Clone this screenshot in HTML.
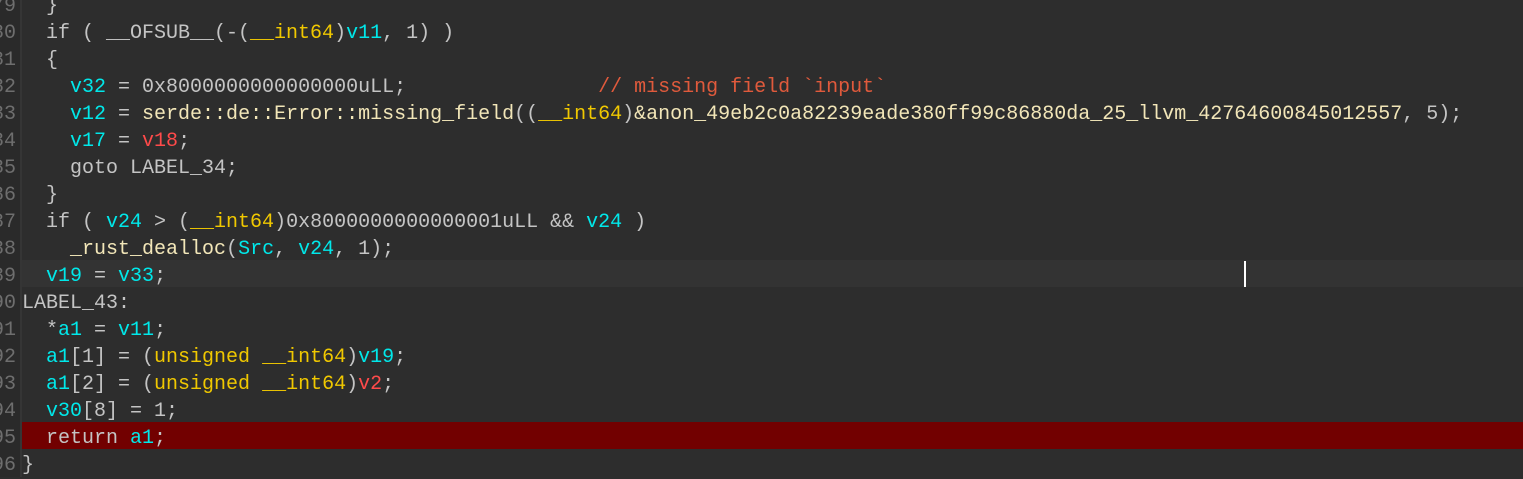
<!DOCTYPE html>
<html><head><style>
html,body{margin:0;padding:0;width:1523px;height:477px;overflow:hidden;background:#2d2d2d;}
body{font-family:"Liberation Mono",monospace;font-size:20px;}
.g{position:absolute;left:0;top:0;width:20px;height:477px;background:#2a2a2a;border-right:2px solid #353535;}
.l{position:absolute;left:0;height:27px;width:1523px;line-height:27px;white-space:pre;color:#c4c4c4;}
.n{position:absolute;right:1507px;top:3px;color:#6e6e6e;}
.c{position:absolute;left:22px;top:3px;}
.hl{background:#333333;}
.ret{background:linear-gradient(to right,transparent 22px,#720000 22px);}
.y{color:#f0c800}.cy{color:#00e8ea}.r{color:#ff4a4a}.cm{color:#e05a3c}.w{color:#f2e6b8}
</style></head><body>
<div class="g"></div>
<div class="l" style="top:-10px"><span class="n">79</span><span class="c">  }</span></div>
<div class="l" style="top:17px"><span class="n">80</span><span class="c">  if ( __OFSUB__(-(<span class="y">__int64</span>)<span class="cy">v11</span>, 1) )</span></div>
<div class="l" style="top:44px"><span class="n">81</span><span class="c">  {</span></div>
<div class="l" style="top:71px"><span class="n">82</span><span class="c">    <span class="cy">v32</span> = 0x8000000000000000uLL;                <span class="cm">// missing field `input`</span></span></div>
<div class="l" style="top:98px"><span class="n">83</span><span class="c">    <span class="cy">v12</span> = <span class="w">serde::de::Error::missing_field</span>((<span class="y">__int64</span>)<span class="w">&amp;anon_49eb2c0a82239eade380ff99c86880da_25_llvm_42764600845012557</span>, 5);</span></div>
<div class="l" style="top:125px"><span class="n">84</span><span class="c">    <span class="cy">v17</span> = <span class="r">v18</span>;</span></div>
<div class="l" style="top:152px"><span class="n">85</span><span class="c">    goto LABEL_34;</span></div>
<div class="l" style="top:179px"><span class="n">86</span><span class="c">  }</span></div>
<div class="l" style="top:206px"><span class="n">87</span><span class="c">  if ( <span class="cy">v24</span> &gt; (<span class="y">__int64</span>)0x8000000000000001uLL &amp;&amp; <span class="cy">v24</span> )</span></div>
<div class="l" style="top:233px"><span class="n">88</span><span class="c">    <span class="w">_rust_dealloc</span>(<span class="cy">Src</span>, <span class="cy">v24</span>, 1);</span></div>
<div class="l hl" style="top:260px;left:22px;width:1501px"></div>
<div class="l" style="top:260px"><span class="n">89</span><span class="c">  <span class="cy">v19</span> = <span class="cy">v33</span>;</span></div>
<div style="position:absolute;left:1244px;top:261px;width:2px;height:26px;background:#fff"></div>
<div class="l" style="top:287px"><span class="n">90</span><span class="c">LABEL_43:</span></div>
<div class="l" style="top:314px"><span class="n">91</span><span class="c">  *<span class="cy">a1</span> = <span class="cy">v11</span>;</span></div>
<div class="l" style="top:341px"><span class="n">92</span><span class="c">  <span class="cy">a1</span>[1] = (<span class="y">unsigned __int64</span>)<span class="cy">v19</span>;</span></div>
<div class="l" style="top:368px"><span class="n">93</span><span class="c">  <span class="cy">a1</span>[2] = (<span class="y">unsigned __int64</span>)<span class="r">v2</span>;</span></div>
<div class="l" style="top:395px"><span class="n">94</span><span class="c">  <span class="cy">v30</span>[8] = 1;</span></div>
<div class="l ret" style="top:422px"><span class="n">95</span><span class="c">  return <span class="cy">a1</span>;</span></div>
<div class="l" style="top:449px"><span class="n">96</span><span class="c">}</span></div>
</body></html>
